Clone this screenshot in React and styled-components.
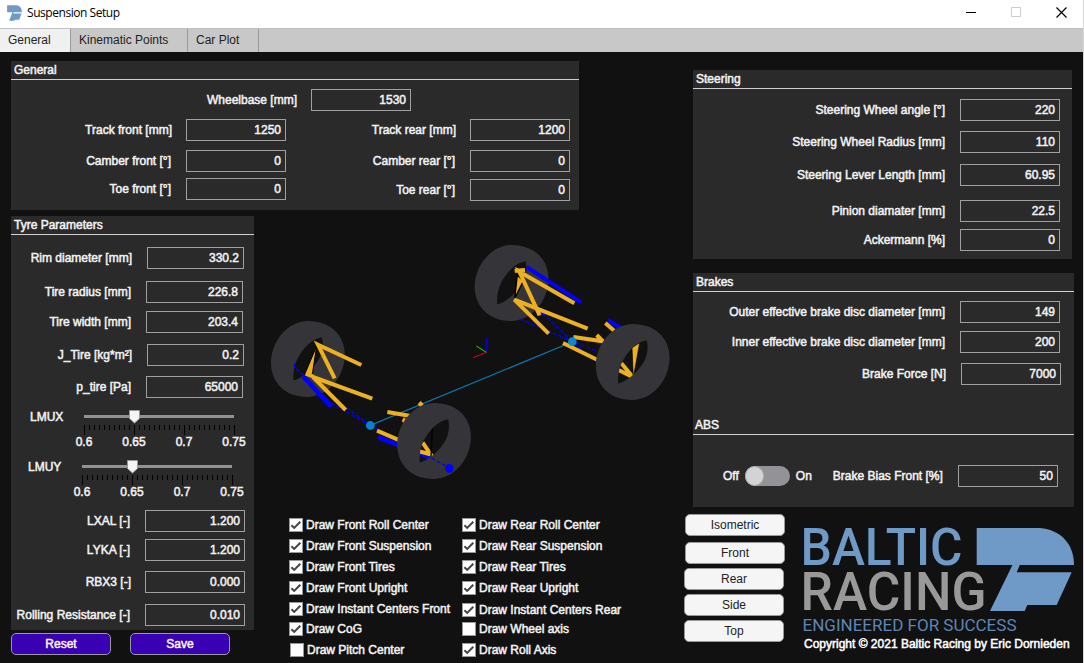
import React from "react";
import styled, { createGlobalStyle } from "styled-components";

const GlobalStyle = createGlobalStyle`
  * { box-sizing: border-box; }
  body { margin: 0; background: #111; }
`;

const Window = styled.div`
  width: 1084px;
  height: 663px;
  display: flex;
  flex-direction: column;
  overflow: hidden;
  background: #111111;
  border-right: 1px solid #d8d8d8;
  color: #f2f2f2;
  font: 12px/16px "Liberation Sans", Arial, sans-serif;
  white-space: nowrap;
`;

const TitleBar = styled.header`
  height: 28px;
  flex: none;
  display: flex;
  align-items: center;
  padding: 0 15px 3px 7px;
  background: #fff;
  color: #000;
`;

const WindowTitle = styled.h1`
  flex: 1;
  margin: 0 0 0 5px;
  font: 400 12px/16px "Open Sans", "Noto Sans", sans-serif;
  letter-spacing: -0.45px;
`;

const WindowControls = styled.div`
  display: flex;
  gap: 34px;
`;

const TabBar = styled.nav`
  height: 24px;
  flex: none;
  display: flex;
  background: #c8c8c8;
  border-top: 1px solid #c0c0c0;
`;

const Tab = styled.div`
  width: ${(p) => p.$width}px;
  padding: 3px 0 0 8px;
  border-right: 1px solid #9b9b9b;
  background: ${(p) => (p.$active ? "#f0f0f0" : "transparent")};
  color: #222;
`;

const Body = styled.main`
  flex: 1;
  display: flex;
  min-height: 0;
  -webkit-text-stroke: 0.5px currentColor;
`;

const SetupArea = styled.div`
  width: 685px;
  flex: none;
  padding: 9px 0 0 11px;
`;

const VehicleArea = styled.div`
  flex: 1;
  padding: 18px 0 0 8px;
`;

const Panel = styled.section`
  width: ${(p) => p.$width}px;
  height: ${(p) => p.$height}px;
  margin-bottom: ${(p) => p.$below ?? 0}px;
  background: #2a2a2a;
`;

const PanelTitle = styled.h2`
  height: 19px;
  margin: ${(p) => p.$top ?? 0}px 0 0;
  padding: 1px 0 0 ${(p) => p.$inset ?? 3}px;
  border-bottom: 1px solid #d0d0d0;
  font: inherit;
`;

const Columns = styled.div`
  display: flex;
`;

const FieldColumn = styled.div`
  width: ${(p) => p.$width}px;
`;

const FieldRow = styled.div`
  display: flex;
  justify-content: flex-end;
  align-items: center;
  height: 22px;
  margin-top: ${(p) => p.$top}px;
  padding-right: ${(p) => p.$right}px;
`;

const FieldLabel = styled.span`
  margin-right: ${(p) => p.$gap}px;
`;

const FieldBox = styled.div`
  width: ${(p) => p.$width}px;
  height: 22px;
  padding: 2px 4px 0 0;
  border: 1px solid #a0a0a0;
  text-align: right;
`;

function Field({ label, value, top, right, gap = 14, width = 100 }) {
  return (
    <FieldRow $top={top} $right={right}>
      <FieldLabel $gap={gap}>{label}</FieldLabel>
      <FieldBox $width={width}>{value}</FieldBox>
    </FieldRow>
  );
}

const SliderRow = styled.div`
  display: flex;
  height: 38px;
  margin: ${(p) => p.$top}px 0 0 ${(p) => p.$left}px;
`;

const SliderLabel = styled.span`
  width: 44px;
`;

const SliderBody = styled.div`
  width: 170px;
`;

const Scale = styled.svg`
  display: block;
`;

const ScaleRow = styled.div`
  display: grid;
  grid-template-columns: repeat(4, 50px);
  width: 200px;
  margin: -2px 0 0 -15px;
`;

const ScaleStop = styled.span`
  text-align: center;
`;

const stops = ["0.6", "0.65", "0.7", "0.75"];

function Slider({ label, top, left }) {
  return (
    <SliderRow $top={top} $left={left}>
      <SliderLabel>{label}</SliderLabel>
      <SliderBody>
        <Scale width="170" height="27" viewBox="0 0 170 27">
          <path d="M10 6h150v3H10z" fill="#929292" />
          {Array.from({ length: 31 }, (_, i) => (
            <rect key={i} x={10 + i * 5} y="16" width="1" height={i % 10 ? 5 : 10} fill="#000" />
          ))}
          <path d="M55.5 1.5h10v8l-5 4.5-5-4.5z" fill="#f5f5f5" stroke="#999" />
        </Scale>
        <ScaleRow>{stops.map((s) => <ScaleStop key={s}>{s}</ScaleStop>)}</ScaleRow>
      </SliderBody>
    </SliderRow>
  );
}

const ActionRow = styled.div`
  display: flex;
  gap: 19px;
  margin-top: 3px;
`;

const Button = styled.button`
  width: 100px;
  height: 22px;
  margin: ${(p) => p.$top ?? 0}px 0 0 ${(p) => p.$left ?? 0}px;
  padding: 0 0 1px;
  display: block;
  border: 1px solid #999;
  border-radius: 5px;
  background: ${(p) => (p.$primary ? "#3a00b3" : "#f5f5f5")};
  color: ${(p) => (p.$primary ? "#f5f5f5" : "#222")};
  font: inherit;
  -webkit-text-stroke: ${(p) => (p.$primary ? "0.5px" : "0")} currentColor;
`;

const CenterColumn = styled.div`
  padding-left: 6px;
`;

const Plot = styled.svg`
  display: block;
`;

const CheckColumns = styled.div`
  display: flex;
  padding-left: 29px;
`;

const CheckColumn = styled.div`
  width: 173px;
`;

const CheckLabel = styled.label`
  display: flex;
  align-items: center;
  height: 14px;
  margin: ${(p) => p.$top}px 0 0 ${(p) => p.$left ?? 0}px;
`;

const CheckBox = styled.svg`
  flex: none;
  margin-right: 3px;
`;

function Check({ label, off, top = 7, left }) {
  return (
    <CheckLabel $top={top} $left={left}>
      <CheckBox width="14" height="14" viewBox="0 0 14 14">
        <rect x="0.5" y="0.5" width="13" height="13" fill="#fff" stroke="#999" />
        {!off && <path d="M2.4 7.2l2.8 2.7 6.1-6.2" fill="none" stroke="#444" strokeWidth="2" />}
      </CheckBox>
      {label}
    </CheckLabel>
  );
}

const SwitchRow = styled.div`
  display: flex;
  align-items: center;
  height: 22px;
  margin-top: 30px;
  padding-left: 30px;
`;

const SwitchTrack = styled.div`
  width: 45px;
  height: 20px;
  margin: 0 6px 0 6px;
  border-radius: 10px;
  background: #929297;
`;

const SwitchKnob = styled.div`
  width: 19px;
  height: 20px;
  border-radius: 10px;
  border: 1px solid #aaa;
  background: #d3d3d6;
`;

const OnLabel = styled.span`
  width: 37px;
`;

const BottomRow = styled.div`
  display: flex;
  margin-left: -8px;
`;

const ViewButtons = styled.div`
  width: 118px;
  padding-top: 7px;
`;

const Brand = styled.div`
  padding-top: 19px;
`;

const BrandArt = styled(Plot)`
  overflow: visible;
  font-family: Roboto, sans-serif;
  font-weight: 500;
  -webkit-text-stroke: 0;
`;

const Copyright = styled.p`
  margin: 0;
  padding-left: 1px;
  color: #fff;
`;

function BrandShape() {
  return (
    <>
      <path d="M976.7 528H1040C1061 530 1074 544 1074 565H976.7Z" />
      <path d="M1012.7 564.5H1020L1016.7 572.3H1071.7L1056.7 605H1027.3L1024.7 611H990Z" />
    </>
  );
}

function TireShape({ x, y }) {
  return (
    <path
      transform={`translate(${x} ${y})`}
      fill="#353439"
      fillRule="evenodd"
      d="M0-38C22-38 37-24 36.8-4C36.5 18 20 38-1 38C-22 38-37 24-37 4C-37-18-20-38 0-38ZM14-21.5C8-21.5-2-15-9-3C-14 5-15 14-14.5 21.5C-8 20 4 12 11 0C15-7 15.5-15 14-21.5Z"
    />
  );
}

function SuspensionPlot() {
  return (
    <Plot width="420" height="302" viewBox="260 216 420 302">
      <TireShape x={308} y={359} />
      <TireShape x={511.7} y={283} />
      <g transform="translate(260 300) scale(0.33333)" fill="none" strokeWidth="12">
        <path d="M104 190v12l26 24M165 284l50 26 115 66M245 313l85 62 240 130" stroke="#00f" strokeWidth="4" strokeDasharray="12 6" />
        <path d="M130 229l84 91M354 411l158 62" stroke="#00f" strokeWidth="14" />
        <path d="M331 376L936 126" stroke="#0c75ad" strokeWidth="4" />
        <path d="M170 138l-36 85h23z" fill="#edb120" stroke="#000" strokeWidth="3" />
        <path d="M304 195L174 134l50 101M337 296l-178-65 98 99M159 229l-22-8M382 336l66 11M351 392l68 29M474 453l38 10-24-35" stroke="#edb120" />
        <path d="M482 304l8 8-8 9-8-8zM432 353l8 8-8 9-6-7z" fill="#edb120" stroke="#edb120" strokeWidth="2" />
        <path d="M517 380l-4 92" stroke="#000" strokeWidth="4" />
      </g>
      <circle cx="370.3" cy="425.5" r="4.4" fill="#0a83cf" />
      <g transform="translate(460 235) scale(0.33333)" fill="none" strokeWidth="12">
        <path d="M180 252l157 67 85 34M249 236l88 83 30 24" stroke="#00f" strokeWidth="4" strokeDasharray="12 6" />
        <path d="M172 120l-8 70 26-52z" fill="#edb120" stroke="#000" strokeWidth="4" />
        <path d="M200 96l164 107M443 255l45 27" stroke="#00f" />
        <circle cx="248" cy="232" r="10" fill="#00f" />
        <path d="M164 107l31-2M343 205L178 110l61 131M383 281l-220-87 103 102M436 264l34 30M340 306l89 13-19-19M309 324l104 51M476 405l43 22-35-42" stroke="#edb120" />
        <path d="M516 338l23-15-19 106z" fill="#edb120" stroke="#000" strokeWidth="2" />
        <circle cx="337" cy="320" r="9" fill="#248cab" stroke="#0787d7" strokeWidth="8" />
        <path d="M79 352v-43" stroke="#00f" strokeWidth="3" />
        <path d="M79 352l-30-19" stroke="#0e0" strokeWidth="3" />
        <path d="M79 352l-40 16" stroke="#e00" strokeWidth="3" />
      </g>
      <TireShape x={434.2} y={441} />
      <TireShape x={632.8} y={362} />
      <path d="M431.5 458l18 10" stroke="#00f" strokeWidth="1.2" strokeDasharray="4 2" />
      <circle cx="449.3" cy="468.4" r="4.3" fill="#00f" />
    </Plot>
  );
}

export default function App() {
  return (
    <>
      <GlobalStyle />
      <Window>
        <TitleBar>
          <svg width="15" height="16" viewBox="976 527 99 85" preserveAspectRatio="none" fill="#6f99c6"><BrandShape /></svg>
          <WindowTitle>Suspension Setup</WindowTitle>
          <WindowControls>
            <svg width="11" height="11" stroke="#000"><path d="M0 5.5h10" /></svg>
            <svg width="11" height="11" fill="none" stroke="#ccc"><path d="M.5.5h9v9h-9z" /></svg>
            <svg width="12" height="11" stroke="#000" strokeWidth="1.2"><path d="M.5 .5l10 10M10.5 .5l-10 10" /></svg>
          </WindowControls>
        </TitleBar>
        <TabBar>
          <Tab $width={71} $active>General</Tab>
          <Tab $width={117}>Kinematic Points</Tab>
          <Tab $width={71}>Car Plot</Tab>
        </TabBar>
        <Body>
          <SetupArea>
            <Panel $width={568} $height={149} $below={6}>
              <PanelTitle>General</PanelTitle>
              <Field label="Wheelbase [mm]" value="1530" top={9} right={168} />
              <Columns>
                <FieldColumn $width={284}>
                  <Field label="Track front [mm]" value="1250" top={8} right={9} />
                  <Field label="Camber front [°]" value="0" top={9} right={9} gap={15} />
                  <Field label="Toe front [°]" value="0" top={6} right={9} gap={15} />
                </FieldColumn>
                <FieldColumn $width={284}>
                  <Field label="Track rear [mm]" value="1200" top={8} right={9} />
                  <Field label="Camber rear [°]" value="0" top={9} right={9} gap={15} />
                  <Field label="Toe rear [°]" value="0" top={7} right={9} gap={15} />
                </FieldColumn>
              </Columns>
            </Panel>
            <Columns>
              <div>
                <Panel $width={243} $height={414}>
                  <PanelTitle>Tyre Parameters</PanelTitle>
                  <Field label="Rim diameter [mm]" value="330.2" top={12} right={10} gap={15} width={97} />
                  <Field label="Tire radius [mm]" value="226.8" top={12} right={11} gap={15} width={97} />
                  <Field label="Tire width [mm]" value="203.4" top={8} right={11} gap={15} width={97} />
                  <Field label="J_Tire [kg*m²]" value="0.2" top={11} right={10} gap={15} width={97} />
                  <Field label="p_tire [Pa]" value="65000" top={10} right={11} gap={15} width={97} />
                  <Slider label="LMUX" top={11} left={19} />
                  <Slider label="LMUY" top={12} left={17} />
                  <Field label="LXAL [-]" value="1.200" top={13} right={9} gap={15} />
                  <Field label="LYKA [-]" value="1.200" top={7} right={9} gap={15} />
                  <Field label="RBX3 [-]" value="0.000" top={10} right={9} />
                  <Field label="Rolling Resistance [-]" value="0.010" top={11} right={9} gap={15} />
                </Panel>
                <ActionRow>
                  <Button $primary>Reset</Button>
                  <Button $primary>Save</Button>
                </ActionRow>
              </div>
              <CenterColumn>
                <SuspensionPlot />
                <CheckColumns>
                  <CheckColumn>
                    <Check label="Draw Front Roll Center" top={0} />
                    <Check label="Draw Front Suspension" />
                    <Check label="Draw Front Tires" />
                    <Check label="Draw Front Upright" />
                    <Check label="Draw Instant Centers Front" />
                    <Check label="Draw CoG" top={6} />
                    <Check label="Draw Pitch Center" off left={1} />
                  </CheckColumn>
                  <CheckColumn>
                    <Check label="Draw Rear Roll Center" top={0} />
                    <Check label="Draw Rear Suspension" />
                    <Check label="Draw Rear Tires" />
                    <Check label="Draw Rear Upright" />
                    <Check label="Draw Instant Centers Rear" top={8} />
                    <Check label="Draw Wheel axis" off top={5} />
                    <Check label="Draw Roll Axis" />
                  </CheckColumn>
                </CheckColumns>
              </CenterColumn>
            </Columns>
          </SetupArea>
          <VehicleArea>
            <Panel $width={379} $height={189} $below={14}>
              <PanelTitle>Steering</PanelTitle>
              <Field label="Steering Wheel angle [°]" value="220" top={10} right={12} gap={15} />
              <Field label="Steering Wheel Radius [mm]" value="110" top={10} right={12} gap={15} />
              <Field label="Steering Lever Length [mm]" value="60.95" top={11} right={12} gap={15} />
              <Field label="Pinion diamater [mm]" value="22.5" top={14} right={12} gap={15} />
              <Field label="Ackermann [%]" value="0" top={7} right={12} gap={15} />
            </Panel>
            <Panel $width={381} $height={234}>
              <PanelTitle>Brakes</PanelTitle>
              <Field label="Outer effective brake disc diameter [mm]" value="149" top={9} right={14} gap={15} />
              <Field label="Inner effective brake disc diameter [mm]" value="200" top={8} right={14} gap={15} />
              <Field label="Brake Force [N]" value="7000" top={10} right={13} gap={15} />
              <PanelTitle $top={31} $inset={2}>ABS</PanelTitle>
              <SwitchRow>
                Off
                <SwitchTrack><SwitchKnob /></SwitchTrack>
                <OnLabel>On</OnLabel>
                <FieldLabel $gap={15}>Brake Bias Front [%]</FieldLabel>
                <FieldBox $width={100}>50</FieldBox>
              </SwitchRow>
            </Panel>
            <BottomRow>
              <ViewButtons>
                <Button>Isometric</Button>
                <Button $top={6}>Front</Button>
                <Button $top={4} $left={-1}>Rear</Button>
                <Button $top={4} $left={-1}>Side</Button>
                <Button $top={4} $left={-1}>Top</Button>
              </ViewButtons>
              <Brand>
                <BrandArt width="272" height="110" viewBox="803 526 272 110">
                  <g fill="#6f99c6"><BrandShape /></g>
                  <text x="800.5" y="565" fontSize="52" textLength="162" lengthAdjust="spacingAndGlyphs" fill="#6f99c6">BALTIC</text>
                  <text x="800.5" y="610" fontSize="53" textLength="186" lengthAdjust="spacingAndGlyphs" fill="#999">RACING</text>
                  <text x="802.5" y="631" fontSize="17" fontWeight="400" textLength="214" lengthAdjust="spacingAndGlyphs" fill="#5f86b4">ENGINEERED FOR SUCCESS</text>
                </BrandArt>
                <Copyright>Copyright © 2021 Baltic Racing by Eric Dornieden</Copyright>
              </Brand>
            </BottomRow>
          </VehicleArea>
        </Body>
      </Window>
    </>
  );
}
